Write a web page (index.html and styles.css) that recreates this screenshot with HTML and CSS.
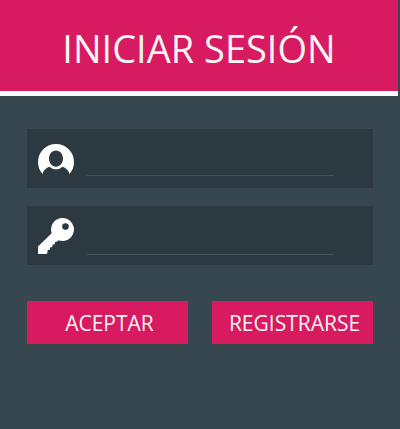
FILE: index.html
```html
<!DOCTYPE html>
<html lang="es">
<head>
<meta charset="utf-8">
<meta name="viewport" content="width=device-width, initial-scale=1">
<title>Iniciar sesión</title>
<link rel="stylesheet" href="styles.css">
</head>
<body>
<header class="header"><h1 class="title">INICIAR SESIÓN</h1></header>
<form class="form">
  <div class="field">
    <label class="label" for="user" aria-label="Usuario">
      <svg class="icon" viewBox="0 0 36 36" aria-hidden="true">
        <path fill="currentColor" fill-rule="evenodd" d="M4.500 30C1.500 26.500 0 22.500 0 18a18 18 0 0 1 36 0c0 4.500-1.500 8.500-4.500 12-.8-3.500-3.500-6.300-7-7.300-1.800 1.700-4 2.600-6.500 2.600s-4.700-.9-6.500-2.600c-3.500 1-6.200 3.800-7 7.300zM18 6.500c-4 0-7 3.600-7 8s3 8.200 7 8.200 7-3.800 7-8.200-3-8-7-8z"/>
      </svg>
    </label>
    <input class="input" id="user" type="text" autocomplete="username">
  </div>
  <div class="field field-key">
    <label class="label" for="password" aria-label="Contraseña">
      <svg class="icon" viewBox="0 0 36 36" aria-hidden="true">
        <path fill="currentColor" fill-rule="evenodd" d="M24.500 0a11.500 11.500 0 1 1-4 22.300l-1 1.200-2.500.5-.3 2.200-2.200.5-.3 2.300-2.200.5-.2 2-2.300.7v2.300L8.500 36H0v-7.500L13.700 15.300A11.500 11.500 0 0 1 24.500 0zM27.500 5.300a3.300 3.300 0 1 0 0 6.600 3.300 3.300 0 0 0 0-6.600z"/>
      </svg>
    </label>
    <input class="input" id="password" type="password" autocomplete="current-password">
  </div>
  <div class="actions">
    <button class="button" type="submit">ACEPTAR</button>
    <button class="button" type="button">REGISTRARSE</button>
  </div>
</form>
</body>
</html>
```
FILE: styles.css
```css
* { box-sizing: border-box; }
body {
  margin: 0;
  min-height: 100vh;
  background: #37474f;
  color: #f5f5f5;
  font-family: "Open Sans", sans-serif;
}
.header {
  margin-right: 2px;
  padding: 22px 0 17px;
  background: #d81b60;
  border-bottom: 5px solid #fff;
}
.title {
  margin: 0;
  font-size: 38px;
  line-height: 52px;
  font-weight: 400;
  text-align: center;
}
.form { padding: 33px 27px; }
.field {
  display: flex;
  gap: 13px;
  margin-bottom: 18px;
  padding: 12px 39px 8px 11px;
  background: #2d3940;
}
.field-key { padding-bottom: 10px; }
.label { display: flex; padding-top: 3px; color: #fff; }
.field-key .label { padding-top: 0; }
.icon { width: 36px; height: 36px; }
.input {
  flex: 1;
  min-width: 0;
  height: 35px;
  padding: 0;
  border: 0;
  border-bottom: 1px solid #465157;
  background: transparent;
  color: inherit;
  font: 400 18px "Open Sans", sans-serif;
  outline: 0;
}
.field-key .input { height: 37px; }
.actions {
  display: grid;
  grid-template-columns: 1fr 1fr;
  gap: 24px;
  margin-top: 36px;
}
.button {
  height: 43px;
  padding: 0 0 0 4px;
  border: 0;
  background: #d81b60;
  color: #f5f5f5;
  font: 400 21px "Open Sans", sans-serif;
}
```
